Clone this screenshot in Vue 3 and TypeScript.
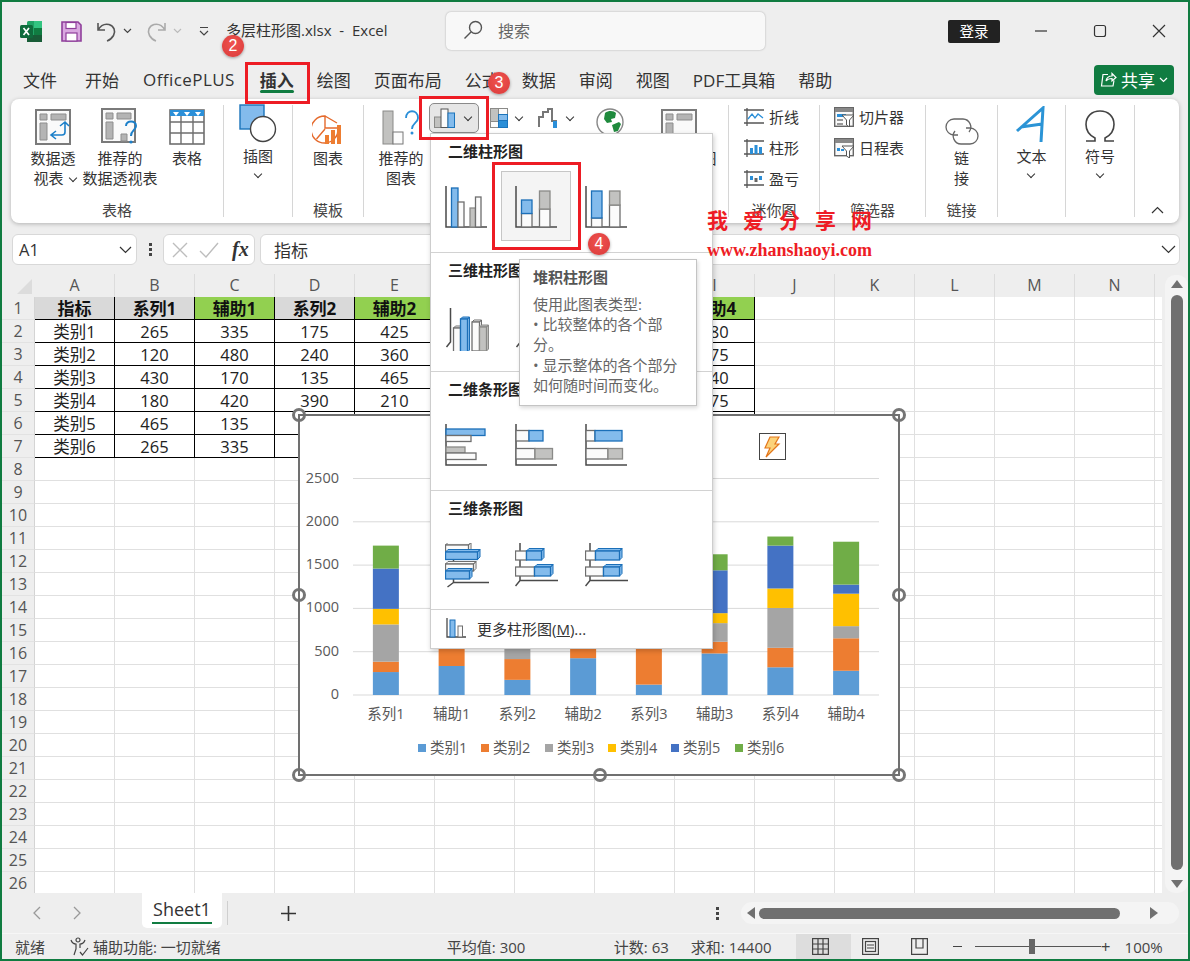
<script setup lang="ts">
import { computed } from 'vue'

interface Bar { k: string; x: number; y: number; w: number; h: number; d?: number }
interface ChartIcon { axis: string; bars: Bar[] }

const bar = (k: string, x: number, y: number, w: number, h: number, d?: number): Bar => ({ k, x, y, w, h, d })

const tabs = ['绘图', '页面布局', '公式', '数据', '审阅', '视图', 'PDF工具箱', '帮助']

const menuSections: { title: string; icons: ChartIcon[] }[] = [
  {
    title: '二维柱形图',
    icons: [
      { axis: 'M1 0V41H42', bars: [bar('blue', 6.5, 2, 6.5, 39), bar('white', 13, 16, 6, 25), bar('gray', 25, 22, 5.5, 19), bar('white', 30.5, 11, 5.5, 30)] },
      { axis: 'M1 0V41H42', bars: [bar('white', 6.5, 27.5, 10.5, 13.5), bar('blue', 6.5, 14, 10.5, 13.5), bar('white', 24.5, 23, 10.5, 18), bar('gray', 24.5, 5, 10.5, 18)] },
      { axis: 'M1 0V41H42', bars: [bar('white', 6.5, 32, 10.5, 9), bar('blue', 6.5, 5, 10.5, 27), bar('white', 24.5, 19, 10.5, 22), bar('gray', 24.5, 5, 10.5, 14)] }
    ]
  },
  {
    title: '三维柱形图',
    icons: [
      { axis: 'M5.5 3V37L1.5 42', bars: [bar('white', 8.5, 23, 7, 24, 2), bar('blue', 15.5, 14, 7, 33, 2), bar('white', 27, 17, 7.5, 29, 2), bar('gray', 34.5, 22, 7, 24, 2)] },
      { axis: 'M5.5 3V37L1.5 42', bars: [bar('white', 10, 30, 9, 16, 2), bar('blue', 10, 18, 9, 12, 2), bar('white', 26, 26, 9, 20, 2), bar('gray', 26, 10, 9, 16, 2)] },
      { axis: 'M5.5 3V37L1.5 42', bars: [bar('white', 10, 34, 9, 12, 2), bar('blue', 10, 10, 9, 24, 2), bar('white', 26, 24, 9, 22, 2), bar('gray', 26, 10, 9, 14, 2)] }
    ]
  },
  {
    title: '二维条形图',
    icons: [
      { axis: 'M1 0V41H42', bars: [bar('blue', 1, 5, 39, 6.5), bar('white', 1, 11.5, 25, 6), bar('gray', 1, 23, 19, 6), bar('white', 1, 29, 30, 6.5)] },
      { axis: 'M1 0V41H42', bars: [bar('white', 1, 6.5, 13, 10.5), bar('blue', 14, 6.5, 14, 10.5), bar('white', 1, 24.5, 19, 10.5), bar('gray', 20, 24.5, 17.5, 10.5)] },
      { axis: 'M1 0V41H42', bars: [bar('white', 1, 6.5, 9, 10.5), bar('blue', 10, 6.5, 27, 10.5), bar('white', 1, 24.5, 22, 10.5), bar('gray', 23, 24.5, 14.5, 10.5)] }
    ]
  },
  {
    title: '三维条形图',
    icons: [
      { axis: 'M8.5 0V39.5H44M8.5 39.5L2.5 44', bars: [bar('white', 0.5, 2, 23, 7, 2.5), bar('blue', 0.5, 9, 32, 7.5, 2.5), bar('white', 0.5, 21, 28, 7, 2.5), bar('blue', 0.5, 28, 24, 8, 2.5)] },
      { axis: 'M5 0V37.5H43M5 37.5L0.5 43', bars: [bar('white', 0.5, 8, 11, 9), bar('blue', 11.5, 8, 15, 9, 2.5), bar('white', 0.5, 24, 19, 9), bar('blue', 19.5, 24, 16, 9, 2.5)] },
      { axis: 'M5 0V37.5H43M5 37.5L0.5 43', bars: [bar('white', 0.5, 8, 10, 9), bar('blue', 10.5, 8, 24, 9, 2.5), bar('white', 0.5, 24, 18, 9), bar('blue', 18.5, 24, 16, 9, 2.5)] }
    ]
  }
]

function depthPath(b: Bar): string {
  const d = b.d ?? 0
  return `M${b.x} ${b.y}l${d} ${-d}h${b.w}l${-d} ${d}zM${b.x + b.w} ${b.y}l${d} ${-d}v${b.h}l${-d} ${d}z`
}

// sheet data, rows 1-7 and columns A-I; the last column only peeks out, so no letter
const columns = [...'ABCDEFGHIJKLMN'.split(''), '']
const table: (string | number)[][] = [
  ['指标', '系列1', '辅助1', '系列2', '辅助2', '系列3', '辅助3', '系列4', '辅助4'],
  ['类别1', 265, 335, 175, 425, 120, 480, 320, 280],
  ['类别2', 120, 480, 240, 360, 465, 135, 225, 375],
  ['类别3', 430, 170, 135, 465, 385, 215, 460, 140],
  ['类别4', 180, 420, 390, 210, 485, 115, 225, 375],
  ['类别5', 465, 135, 90, 510, 105, 495, 495, 105],
  ['类别6', 265, 335, 335, 265, 415, 185, 105, 495]
]
const rowCount = 26

function cellText(r: number, c: number): string | number {
  return table[r]?.[c] ?? ''
}

function cellClass(r: number, c: number): string[] {
  if (r >= table.length || c >= table[0].length) return []
  const out = ['edged']
  if (r === 0) {
    out.push('head-cell', c > 0 && c % 2 === 0 ? 'fill-green' : 'fill-gray')
  }
  return out
}

// chart geometry, in the chart's own coordinates
const seriesColors = ['#5b9bd5', '#ed7d31', '#a5a5a5', '#ffc000', '#4472c4', '#70ad47']
const plotLeft = 54
const plotRight = 580
const plotBottom = 280
const perUnit = 216.5 / 2500
const slot = (plotRight - plotLeft) / 8

const gridLines = [0, 500, 1000, 1500, 2000, 2500].map((v) => ({ v, y: plotBottom - v * perUnit }))

const stacks = computed(() =>
  table[0].slice(1).map((label, i) => {
    let sum = 0
    const segments = table.slice(1).map((row, k) => {
      const v = row[i + 1] as number
      const h = v * perUnit
      sum += h
      return { color: seriesColors[k], y: plotBottom - sum, h }
    })
    return { label, x: plotLeft + slot * (i + 0.5), segments }
  })
)

const legendX = [119, 182, 246, 309, 372, 436]
const handles = [[0, 0], [301, 0], [600, 0], [0, 180], [600, 180], [0, 360], [301, 360], [600, 360]]
</script>

<template>
  <div class="app">
    <!-- title bar -->
    <header class="titlebar">
      <svg class="ml18" width="22" height="21" viewBox="0 0 22 21">
        <rect x="7" y="0" width="15" height="21" rx="1.5" fill="#21a366" />
        <rect x="14" y="0" width="8" height="7" fill="#33c481" />
        <rect x="14" y="7" width="8" height="7" fill="#107c41" />
        <rect x="7" y="14" width="15" height="7" fill="#185c37" />
        <rect x="0" y="4" width="13" height="13" rx="1.5" fill="#0f6b3c" />
        <path d="M3.5 7l5.5 7M9 7l-5.5 7" stroke="#fff" stroke-width="1.7" />
      </svg>
      <svg class="ml19" width="21" height="21" viewBox="0 0 21 21">
        <path d="M1 1H17L20 4V20H1Z" fill="#d9a8e0" stroke="#8f3f9b" stroke-width="1.6" />
        <rect x="5" y="1.5" width="10" height="6" fill="#fff" stroke="#8f3f9b" stroke-width="1.2" />
        <rect x="5" y="12" width="11" height="8" fill="#fff" stroke="#8f3f9b" stroke-width="1.2" />
      </svg>
      <svg class="ml14" width="21" height="21" viewBox="0 0 21 21" fill="none" stroke="#555" stroke-width="1.6">
        <path d="M2 2V9H9M2 9C5 4 9 2.5 13 3.5C18 5 20 10 17.5 14.5C16 17 14 19 11 20" />
      </svg>
      <svg class="ml6" width="9" height="6" viewBox="0 0 9 6" fill="none" stroke="#444" stroke-width="1.2"><path d="M1 1l3.5 3.5L8 1" /></svg>
      <svg class="ml14" width="21" height="21" viewBox="0 0 21 21" fill="none" stroke="#aaa" stroke-width="1.6">
        <path d="M19 2V9H12M19 9C16 4 12 2.5 8 3.5C3 5 1 10 3.5 14.5C5 17 7 19 10 20" />
      </svg>
      <svg class="ml6" width="9" height="6" viewBox="0 0 9 6" fill="none" stroke="#bbb" stroke-width="1.2"><path d="M1 1l3.5 3.5L8 1" /></svg>
      <svg class="ml17" width="10" height="11" viewBox="0 0 10 11" fill="none" stroke="#444" stroke-width="1.2">
        <path d="M1 1.5H9M1 5l4 4 4-4" />
      </svg>
      <span class="doc-title">多层柱形图.xlsx&nbsp; - &nbsp;Excel</span>
      <div class="search">
        <svg width="20" height="20" viewBox="0 0 20 20" fill="none" stroke="#555" stroke-width="1.4">
          <circle cx="12.5" cy="7.5" r="6" /><path d="M8 12L1.5 18.5" />
        </svg>
        <span>搜索</span>
      </div>
      <span class="login">登录</span>
      <svg class="win-btn first-win" width="14" height="14" viewBox="0 0 14 14" stroke="#333" stroke-width="1.2"><path d="M1 7H13" /></svg>
      <svg class="win-btn" width="14" height="14" viewBox="0 0 14 14" fill="none" stroke="#333" stroke-width="1.2"><rect x="1.5" y="1.5" width="11" height="11" rx="2" /></svg>
      <svg class="win-btn" width="14" height="14" viewBox="0 0 14 14" stroke="#333" stroke-width="1.2"><path d="M1 1L13 13M13 1L1 13" /></svg>
    </header>

    <!-- tab strip -->
    <nav class="tabs">
      <span class="tab tab-file">文件</span>
      <span class="tab tab-home">开始</span>
      <span class="tab tab-plus">OfficePLUS</span>
      <span class="tab active">插入</span>
      <span v-for="t in tabs" :key="t" class="tab">{{ t }}</span>
      <button class="share">
        <svg width="17" height="17" viewBox="0 0 17 17" fill="none" stroke="#fff" stroke-width="1.2">
          <path d="M8 3.5H3L1.5 15H13L14 9.5M6 10C6.5 7 9 5 12 5V2.5L16 6.5L12 10V7.5C10 7.5 7.5 8 6 10Z" />
        </svg>
        <span>共享</span>
        <svg width="9" height="6" viewBox="0 0 9 6" fill="none" stroke="#fff" stroke-width="1.2"><path d="M1 1l3.5 3.5L8 1" /></svg>
      </button>
    </nav>

    <!-- ribbon -->
    <section class="ribbon">
      <div class="group g-tables">
        <div class="g-body">
          <div class="big w62">
            <div class="icon-area">
              <svg width="36" height="36" viewBox="0 0 36 36">
                <rect x="1" y="1" width="34" height="34" fill="#fafafa" stroke="#7a7a7a" stroke-width="2" />
                <path d="M5 5h7v6H5zM16 5h15v6H16zM5 14h7v17H5z" fill="#b4b4b4" stroke="#8d8d8d" />
                <path d="M30 14v9a3 3 0 0 1-3 3H17M25 17l5-4 4 4M21 22l-5 4 5 4" fill="none" stroke="#1b7fc9" stroke-width="1.6" />
              </svg>
            </div>
            <span>数据透</span>
            <span class="pivot-line">视表 <i class="chev" /></span>
          </div>
          <div class="big w72">
            <div class="icon-area">
              <svg width="38" height="37" viewBox="0 0 38 37">
                <rect x="1" y="1" width="33" height="33" fill="#fafafa" stroke="#7a7a7a" stroke-width="2" />
                <path d="M5 5h7v6H5zM16 5h14v6H16zM5 14h7v17H5zM20 26h6v7h-6z" fill="#b4b4b4" stroke="#8d8d8d" />
                <path d="M25 18c0-6 10-6 10 0 0 4-5 4-5 10" fill="none" stroke="#1b7fc9" stroke-width="2" />
                <circle cx="30" cy="34" r="1.6" fill="#1b7fc9" />
              </svg>
            </div>
            <span>推荐的</span>
            <span>数据透视表</span>
          </div>
          <div class="big w62">
            <div class="icon-area">
              <svg width="36" height="36" viewBox="0 0 36 36">
                <rect x="1" y="1" width="34" height="34" fill="#fff" stroke="#6e6e6e" stroke-width="1.6" />
                <rect x="1" y="1" width="34" height="6" fill="#2b8fd8" />
                <path d="M4 3h6l-3 4zM15 3h6l-3 4zM26 3h6l-3 4z" fill="#fff" />
                <path d="M1 13H35M1 24H35M12 7V35M24 7V35" stroke="#6e6e6e" stroke-width="1.4" />
              </svg>
            </div>
            <span>表格</span>
          </div>
        </div>
        <span class="g-label">表格</span>
      </div>

      <div class="group g-illus">
        <div class="g-body center">
          <div class="big low">
            <div class="icon-area">
              <svg width="38" height="39" viewBox="0 0 38 39">
                <rect x="1" y="1" width="24" height="24" fill="#83bbec" stroke="#1b74bb" stroke-width="1.4" />
                <circle cx="24" cy="25" r="12.5" fill="#fff" stroke="#444" stroke-width="1.4" />
              </svg>
            </div>
            <span>插图</span>
            <i class="chev stand" />
          </div>
        </div>
      </div>

      <div class="group g-template">
        <div class="g-body center">
          <div class="big">
            <div class="icon-area">
              <svg width="32" height="30" viewBox="0 0 32 30" fill="none">
                <path d="M13 1a13.5 13.5 0 1 0 13 12H13ZM13 1 25 8M13 14 4.5 24" stroke="#e56a2c" stroke-width="1.4" />
                <path d="M13 20h4v9h-4zM19 15h4v14h-4zM25 10h4v19h-4z" fill="#ed7d31" />
              </svg>
            </div>
            <span>图表</span>
          </div>
        </div>
        <span class="g-label">模板</span>
      </div>

      <div class="group g-charts">
        <div class="g-body">
          <div class="big rec-chart">
            <div class="icon-area">
              <svg width="38" height="35" viewBox="0 0 38 35">
                <rect x="1" y="1" width="10" height="33" fill="#c2c2c0" stroke="#8a8a88" />
                <rect x="11" y="22" width="10" height="12" fill="#fbfbfb" stroke="#777" />
                <path d="M24 8c0-9 12-9 12 0 0 5-6 5-6 11" fill="none" stroke="#2b8fd8" stroke-width="1.8" />
                <circle cx="30" cy="23" r="1.5" fill="#2b8fd8" />
              </svg>
            </div>
            <span>推荐的</span>
            <span>图表</span>
          </div>
          <div class="combo">
            <svg width="21" height="20" viewBox="0 0 21 20">
              <rect x="0.5" y="9" width="7" height="10.5" fill="#c2c2c0" stroke="#8a8a88" />
              <rect x="7" y="1" width="7" height="18.5" fill="#fbfbfb" stroke="#555" />
              <rect x="14" y="5" width="6.5" height="14.5" fill="#83bbec" stroke="#1b74bb" />
            </svg>
            <i class="chev" />
          </div>
          <div class="small-chart hier">
            <svg width="18" height="20" viewBox="0 0 18 20">
              <rect x="0.5" y="0.5" width="8" height="13" fill="#c2c2c0" stroke="#8a8a88" />
              <rect x="0.5" y="13.5" width="8" height="6" fill="#fbfbfb" stroke="#8a8a88" />
              <rect x="8.5" y="0.5" width="9" height="6" fill="#fbfbfb" stroke="#8a8a88" />
              <rect x="8.5" y="6.5" width="9" height="6" fill="#83bbec" stroke="#1b74bb" />
              <rect x="8.5" y="12.5" width="9" height="7" fill="#2b8fd8" stroke="#1b74bb" />
            </svg>
            <i class="chev" />
          </div>
          <div class="small-chart fall">
            <svg width="21" height="20" viewBox="0 0 21 20" fill="none">
              <path d="M1 19V9H5V4H10V1H14V13H18V19" stroke="#777" stroke-width="2" />
              <rect x="15" y="13" width="4" height="7" fill="#2b8fd8" />
            </svg>
            <i class="chev" />
          </div>
          <div class="map-btn">
            <svg width="28" height="28" viewBox="0 0 28 28">
              <circle cx="14" cy="14" r="13" fill="#fff" stroke="#888" stroke-width="1.4" />
              <path d="M9 5c4-3 9-2 11 0l-1 5-4 1 1 3-5 1-3-4zM16 17l7-3 2 2-3 7-4 1z" fill="#1f8a3d" />
            </svg>
          </div>
          <div class="big pivot-chart">
            <div class="icon-area">
              <svg width="36" height="36" viewBox="0 0 36 36">
                <rect x="1" y="1" width="34" height="34" fill="#fafafa" stroke="#7a7a7a" stroke-width="2" />
                <path d="M5 5h7v6H5zM16 5h15v6H16zM5 14h7v17H5z" fill="#b4b4b4" stroke="#8d8d8d" />
              </svg>
            </div>
            <span>数据透视图</span>
          </div>
        </div>
        <span class="g-label">图表</span>
      </div>

      <div class="group g-spark">
        <div class="g-body column">
          <div class="line-item">
            <svg width="20" height="18" viewBox="0 0 20 18" fill="none">
              <path d="M3 0V18M0 2H20M0 15H20" stroke="#555" stroke-width="1.3" />
              <path d="M4 11L8 6L11 10L14 6L19 10" stroke="#2b8fd8" stroke-width="1.3" />
            </svg>
            折线
          </div>
          <div class="line-item">
            <svg width="20" height="18" viewBox="0 0 20 18" fill="none">
              <path d="M3 0V18M0 2H20M0 15H20" stroke="#555" stroke-width="1.3" />
              <path d="M6 9h3v6H6zM10.5 6h3v9h-3zM15 8h3v7h-3z" fill="#2b8fd8" />
            </svg>
            柱形
          </div>
          <div class="line-item">
            <svg width="20" height="18" viewBox="0 0 20 18" fill="none">
              <path d="M3 0V18M0 2H20M0 15H20" stroke="#555" stroke-width="1.3" />
              <path d="M6 6h3v4H6zM15 6h3v4h-3z" fill="#2b8fd8" />
              <path d="M10.5 8h3v4h-3z" fill="#666" />
            </svg>
            盈亏
          </div>
        </div>
        <span class="g-label">迷你图</span>
      </div>

      <div class="group g-filter">
        <div class="g-body column">
          <div class="line-item">
            <svg width="20" height="20" viewBox="0 0 20 20">
              <rect x="0.7" y="0.7" width="18.6" height="18.6" fill="#fafafa" stroke="#666" stroke-width="1.4" />
              <rect x="1" y="1" width="18" height="4" fill="#888" />
              <path d="M3 7h9v3H3z" fill="#2b8fd8" /><path d="M3 12h6v2H3zM3 16h6v2H3z" fill="#999" />
              <path d="M8 8H20L15.5 13V20L12.5 18V13Z" fill="#fff" stroke="#555" />
            </svg>
            切片器
          </div>
          <div class="line-item">
            <svg width="20" height="20" viewBox="0 0 20 20">
              <rect x="0.7" y="0.7" width="18.6" height="17" fill="#fafafa" stroke="#666" stroke-width="1.4" />
              <rect x="1" y="1" width="18" height="4" fill="#888" />
              <path d="M3 10h3v3H3zM7 11h3v2H7z" fill="#2b8fd8" />
              <path d="M8 8H20L15.5 13V20L12.5 18V13Z" fill="#fff" stroke="#555" />
            </svg>
            日程表
          </div>
        </div>
        <span class="g-label">筛选器</span>
      </div>

      <div class="group g-link">
        <div class="g-body center">
          <div class="big">
            <div class="icon-area">
              <svg width="36" height="27" viewBox="0 0 36 27" fill="none" stroke="#666" stroke-width="1.3">
                <path d="M14 17H10A8 8 0 0 1 10 1H19A8 8 0 0 1 25 14" />
                <path d="M22 10H26A8 8 0 0 1 26 26H17A8 8 0 0 1 11 13" />
              </svg>
            </div>
            <span>链</span>
            <span>接</span>
          </div>
        </div>
        <span class="g-label">链接</span>
      </div>

      <div class="group g-text">
        <div class="g-body center">
          <div class="big low">
            <div class="icon-area">
              <svg width="30" height="37" viewBox="0 0 30 37" fill="none" stroke="#2b94d6" stroke-width="3">
                <path d="M1 25L27 2L25 36M5 21L26 18" />
              </svg>
            </div>
            <span>文本</span>
            <i class="chev stand" />
          </div>
        </div>
      </div>

      <div class="group g-symbol">
        <div class="g-body center">
          <div class="big low">
            <div class="icon-area">
              <svg width="30" height="33" viewBox="0 0 30 33" fill="none" stroke="#444" stroke-width="1.6">
                <path d="M1 31H10V28C4 25 1 20 1 14.5C1 6 7 1 15 1C23 1 29 6 29 14.5C29 20 26 25 20 28V31H29" />
              </svg>
            </div>
            <span>符号</span>
            <i class="chev stand" />
          </div>
        </div>
      </div>

      <div class="collapse">
        <svg width="13" height="8" viewBox="0 0 13 8" fill="none" stroke="#333" stroke-width="1.2"><path d="M1 7L6.5 1.5L12 7" /></svg>
      </div>
    </section>

    <!-- formula bar -->
    <div class="formula">
      <div class="name-box">
        <span>A1</span>
        <svg width="13" height="8" viewBox="0 0 13 8" fill="none" stroke="#333" stroke-width="1.2"><path d="M1 1L6.5 6.5L12 1" /></svg>
      </div>
      <div class="dots"><i /><i /><i /></div>
      <div class="fx-box">
        <svg width="16" height="16" viewBox="0 0 16 16" stroke="#bdbdbd" stroke-width="1.4"><path d="M1 1L15 15M15 1L1 15" /></svg>
        <svg width="20" height="16" viewBox="0 0 20 16" fill="none" stroke="#bdbdbd" stroke-width="1.4"><path d="M1 9L7 15L19 1" /></svg>
        <span class="fx">fx</span>
      </div>
      <div class="formula-input">
        <span>指标</span>
        <svg width="15" height="9" viewBox="0 0 15 9" fill="none" stroke="#333" stroke-width="1.2"><path d="M1 1L7.5 7.5L14 1" /></svg>
      </div>
    </div>

    <!-- worksheet -->
    <div class="sheet-row">
      <div class="grid">
        <div class="corner"><i /></div>
        <div v-for="(c, ci) in columns" :key="ci" class="col-head">{{ c }}</div>
        <template v-for="(_, r) in rowCount" :key="r">
          <div class="row-head">{{ r + 1 }}</div>
          <div v-for="(c, ci) in columns" :key="ci" class="cell" :class="cellClass(r, ci)">{{ cellText(r, ci) }}</div>
        </template>
      </div>
      <div class="vscroll">
        <div class="v-track">
          <i class="arrow-up" />
          <div class="v-thumb" />
          <i class="arrow-down" />
        </div>
      </div>
    </div>

    <!-- sheet tabs -->
    <div class="sheetbar">
      <svg class="nav-l" width="10" height="14" viewBox="0 0 10 14" fill="none" stroke="#999" stroke-width="1.3"><path d="M8 1L2 7L8 13" /></svg>
      <svg class="nav-r" width="10" height="14" viewBox="0 0 10 14" fill="none" stroke="#999" stroke-width="1.3"><path d="M2 1L8 7L2 13" /></svg>
      <div class="sheet-tab">Sheet1</div>
      <i class="tab-sep" />
      <svg class="add" width="15" height="15" viewBox="0 0 15 15" stroke="#333" stroke-width="1.6"><path d="M7.5 0V15M0 7.5H15" /></svg>
      <div class="dots sheet-dots"><i /><i /><i /></div>
      <div class="hscroll">
        <i class="arrow-left" />
        <div class="h-thumb" />
        <i class="arrow-right" />
      </div>
    </div>

    <!-- status bar -->
    <footer class="status">
      <span class="st-ready">就绪</span>
      <svg class="st-access" width="19" height="20" viewBox="0 0 19 20" fill="none" stroke="#444" stroke-width="1.2">
        <circle cx="8" cy="3" r="2" />
        <path d="M1 3C2 6 4 7 6 7V12L4 18M15 3C14 6 12 7 10 7V11M10 15L12.5 18L18 11" />
      </svg>
      <span>辅助功能: 一切就绪</span>
      <span class="st-avg">平均值: 300</span>
      <span class="st-count">计数: 63</span>
      <span class="st-sum">求和: 14400</span>
      <div class="view-btn selected">
        <svg width="17" height="17" viewBox="0 0 17 17" fill="none" stroke="#444" stroke-width="1.2">
          <rect x="0.6" y="0.6" width="15.8" height="15.8" /><path d="M0 6H17M0 11H17M6 0V17M11 0V17" />
        </svg>
      </div>
      <div class="view-btn">
        <svg width="17" height="17" viewBox="0 0 17 17" fill="none" stroke="#444" stroke-width="1.2">
          <rect x="0.6" y="0.6" width="15.8" height="15.8" /><rect x="3.5" y="3.5" width="10" height="10" /><path d="M5 7H12M5 10H12" />
        </svg>
      </div>
      <div class="view-btn last-view">
        <svg width="17" height="17" viewBox="0 0 17 17" fill="none" stroke="#444" stroke-width="1.2">
          <path d="M0.6 0.6H16.4V16.4H0.6ZM5 0.6V10H12V0.6" />
        </svg>
      </div>
      <div class="zoom">
        <i class="minus" />
        <div class="slider"><i /></div>
        <span class="plus">+</span>
      </div>
      <span class="st-zoom">100%</span>
    </footer>

    <!-- embedded chart, free on top of the sheet -->
    <div class="chart">
      <svg width="600" height="360" viewBox="0 0 600 360">
        <g v-for="g in gridLines" :key="g.v">
          <line :x1="plotLeft" :x2="plotRight" :y1="g.y" :y2="g.y" stroke="#d9d9d9" />
          <text :x="40" :y="g.y + 4" text-anchor="end" class="chart-text">{{ g.v }}</text>
        </g>
        <g v-for="s in stacks" :key="s.label">
          <rect v-for="seg in s.segments" :key="seg.color" :x="s.x - 13" :y="seg.y" width="26" :height="seg.h" :fill="seg.color" />
          <text :x="s.x" y="304" text-anchor="middle" class="chart-text">{{ s.label }}</text>
        </g>
        <g v-for="(x, i) in legendX" :key="x">
          <rect :x="x" y="329" width="8" height="8" :fill="seriesColors[i]" />
          <text :x="x + 12" y="338" class="chart-text">{{ table[i + 1][0] }}</text>
        </g>
        <circle v-for="(h, i) in handles" :key="i" :cx="h[0]" :cy="h[1]" r="5.5" fill="#fff" stroke="#757575" stroke-width="3" />
      </svg>
      <div class="quick">
        <svg width="18" height="22" viewBox="0 0 18 22">
          <path d="M6 1H15L11 8H15L2 21L6 12H1Z" fill="#fbd27a" stroke="#e3761b" stroke-width="1.2" />
        </svg>
      </div>
    </div>

    <!-- open dropdown -->
    <div class="menu">
      <div v-for="sec in menuSections" :key="sec.title" class="menu-sec">
        <div class="menu-title">{{ sec.title }}</div>
        <div class="menu-icons">
          <div v-for="(ic, i) in sec.icons" :key="i" class="menu-item" :class="{ picked: sec.title === '二维柱形图' && i === 1 }">
            <svg width="46" height="46" viewBox="0 0 46 46">
              <path :d="ic.axis" fill="none" stroke="#4a4a4a" stroke-width="1.5" />
              <template v-for="(b, k) in ic.bars" :key="k">
                <path v-if="b.d" :d="depthPath(b)" :class="'bar-' + b.k" stroke-width="1" />
                <rect :x="b.x" :y="b.y" :width="b.w" :height="b.h" :class="'bar-' + b.k" stroke-width="1.3" />
              </template>
            </svg>
          </div>
        </div>
      </div>
      <div class="menu-more">
        <svg width="20" height="20" viewBox="0 0 20 20">
          <path d="M1 0V19H20" fill="none" stroke="#4a4a4a" stroke-width="1.3" />
          <rect class="bar-blue" x="4" y="2" width="5" height="17" />
          <rect class="bar-white" x="12" y="8" width="4.5" height="11" />
        </svg>
        <span>更多柱形图(<u>M</u>)...</span>
      </div>
    </div>

    <!-- tooltip of the hovered chart type -->
    <div class="tip">
      <div class="tip-title">堆积柱形图</div>
      <p>使用此图表类型:<br />• 比较整体的各个部<br />分。<br />• 显示整体的各个部分<br />如何随时间而变化。</p>
    </div>

    <!-- tutorial marks drawn over the screenshot -->
    <i class="mark mark-tab" />
    <i class="mark mark-btn" />
    <i class="mark mark-item" />
    <span class="badge b2">2</span>
    <span class="badge b3">3</span>
    <span class="badge b4">4</span>
    <div class="watermark">
      <div class="wm-cn">我爱分享网</div>
      <div class="wm-url">www.zhanshaoyi.com</div>
    </div>
  </div>
</template>

<style scoped>
.app {
  position: relative;
  box-sizing: border-box;
  width: 1190px;
  height: 961px;
  padding: 2px;
  display: flex;
  flex-direction: column;
  overflow: hidden;
  background: #eeeeee;
  box-shadow: inset 0 0 0 2px #107c41;
  color: #333;
  font-family: "Open Sans", "Noto Sans CJK SC", sans-serif;
  font-size: 15px;
}

svg {
  display: block;
  flex: none;
}

i {
  display: block;
}

/* title bar */
.titlebar {
  height: 58px;
  flex: none;
  display: flex;
  align-items: center;
}
.ml18 { margin-left: 18px; }
.ml19 { margin-left: 19px; }
.ml14 { margin-left: 14px; }
.ml6 { margin-left: 6px; }
.ml17 { margin-left: 17px; }

.doc-title {
  margin: -3px 0 0 17px;
  width: 220px;
  font-size: 15px;
  white-space: nowrap;
}

.search {
  box-sizing: border-box;
  width: 319px;
  height: 38px;
  display: flex;
  align-items: center;
  gap: 15px;
  padding: 0 0 2px 17px;
  background: #f8f8f8;
  border-radius: 5px;
  box-shadow: 0 0 2px rgba(0, 0, 0, 0.3);
  color: #666;
  font-size: 16px;
}

.login {
  margin-left: 183px;
  width: 52px;
  height: 23px;
  line-height: 23px;
  text-align: center;
  background: #222;
  color: #fff;
  border-radius: 2px;
  font-size: 14.5px;
}

.win-btn {
  margin-left: 45px;
}
.first-win {
  margin-left: 34px;
}

/* tabs */
.tabs {
  height: 39px;
  flex: none;
  display: flex;
  align-items: center;
  gap: 23px;
  padding-right: 14px;
}
.tab {
  font-size: 17px;
  white-space: nowrap;
}
.tab-file { margin-left: 21px; }
.tab-home { margin-left: 5px; }
.tab-plus {
  margin-left: 1px;
  letter-spacing: 0.44px;
}
.active {
  position: relative;
  margin-left: 2px;
  font-weight: 700;
}
.active::after {
  content: "";
  position: absolute;
  left: 0;
  right: 0;
  bottom: -1px;
  height: 3px;
  border-radius: 2px;
  background: #107c41;
}

.share {
  margin-left: auto;
  width: 80px;
  height: 30px;
  display: flex;
  align-items: center;
  justify-content: center;
  gap: 4px;
  padding: 0;
  border: 0;
  border-radius: 4px;
  background: #107c41;
  color: #fff;
  font: inherit;
  font-size: 17px;
}

/* ribbon */
.ribbon {
  height: 124px;
  flex: none;
  box-sizing: border-box;
  margin: 0 9px;
  padding: 6px 0;
  display: flex;
  background: #fff;
  border-radius: 8px;
  box-shadow: 0 1px 4px rgba(0, 0, 0, 0.25);
}
.group {
  box-sizing: border-box;
  display: flex;
  flex-direction: column;
  border-right: 1px solid #d6d6d6;
}
.g-tables { width: 213px; }
.g-illus { width: 69px; }
.g-template { width: 71px; }
.g-charts { width: 365px; }
.g-spark { width: 91px; }
.g-filter { width: 106px; }
.g-link { width: 72px; }
.g-text { width: 68px; }
.g-symbol { width: 69px; }

.g-body {
  flex: 1;
  min-height: 0;
  display: flex;
}
.g-tables .g-body { padding-left: 11px; }
.center { justify-content: center; }
.column {
  flex-direction: column;
  margin-top: -4px;
  padding-left: 15px;
}
.g-filter .column {
  padding-left: 14px;
}

.g-label {
  flex: none;
  height: 14px;
  line-height: 14px;
  text-align: center;
  color: #444;
}

.big {
  display: flex;
  flex-direction: column;
  align-items: center;
  line-height: 20px;
  white-space: nowrap;
}
.w62 { width: 62px; }
.w72 { width: 72px; }
.icon-area {
  height: 43px;
  display: flex;
  align-items: flex-end;
  padding-bottom: 3px;
  box-sizing: border-box;
}
.low .icon-area {
  height: 41px;
}
.pivot-line {
  margin-right: -4px;
}
.chev {
  display: inline-block;
  width: 5px;
  height: 5px;
  margin: 0 0 3px 3px;
  border-right: 1.2px solid #333;
  border-bottom: 1.2px solid #333;
  transform: rotate(45deg);
}
.chev.stand {
  margin: 5px 0 0;
}

.rec-chart {
  width: 60px;
  margin-left: 7px;
}
.combo {
  box-sizing: border-box;
  width: 50px;
  height: 30px;
  margin: -2px 0 0 -2px;
  display: flex;
  align-items: center;
  gap: 7px;
  padding-left: 4px;
  background: #e6e6e6;
  border: 1px solid #8a8a8a;
  border-radius: 5px;
}
.small-chart {
  height: 26px;
  display: flex;
  align-items: center;
  gap: 5px;
}
.hier { margin-left: 11px; }
.fall { margin-left: 16px; }
.map-btn {
  margin: 3px 0 0 23px;
}
.pivot-chart {
  width: 70px;
  margin-left: 20px;
}

.line-item {
  height: 31px;
  display: flex;
  align-items: center;
  gap: 5px;
  white-space: nowrap;
}

.collapse {
  flex: 1;
  display: flex;
  justify-content: center;
  align-items: flex-end;
  padding-bottom: 3px;
}

/* formula bar */
.formula {
  height: 51px;
  flex: none;
  box-sizing: border-box;
  padding: 11px 8px 9px 10px;
  display: flex;
  font-size: 16.5px;
}
.name-box,
.fx-box,
.formula-input {
  box-sizing: border-box;
  display: flex;
  align-items: center;
  background: #fff;
  border: 1px solid #d8d8d8;
  border-radius: 6px;
}
.name-box {
  width: 125px;
  justify-content: space-between;
  padding: 0 4px 0 6px;
}
.dots {
  display: flex;
  flex-direction: column;
  justify-content: center;
  gap: 2px;
  width: 26px;
  align-items: center;
}
.dots i {
  width: 3px;
  height: 3px;
  background: #444;
}
.fx-box {
  width: 92px;
  gap: 11px;
  padding-left: 8px;
}
.fx {
  font-family: "Liberation Serif", serif;
  font-size: 20px;
  font-style: italic;
  font-weight: 700;
  margin-left: 2px;
}
.formula-input {
  flex: 1;
  margin-left: 5px;
  justify-content: space-between;
  padding: 0 3px 0 13px;
  font-size: 17px;
}

/* worksheet */
.sheet-row {
  height: 619px;
  flex: none;
  display: flex;
}
.grid {
  width: 1160px;
  display: grid;
  grid-template-columns: 33px repeat(15, 80px);
  grid-auto-rows: 23px;
  overflow: hidden;
  font-size: 16.5px;
  line-height: 23px;
}
.corner {
  position: relative;
  background: #eee;
}
.corner i {
  position: absolute;
  left: 15px;
  top: 5px;
  width: 15px;
  height: 15px;
  background: #dcdcdc;
  clip-path: polygon(100% 0, 100% 100%, 0 100%);
}
.col-head,
.row-head {
  background: #eee;
  color: #555;
  text-align: center;
  font-size: 16px;
}
.col-head {
  border-right: 1px solid #dcdcdc;
}
.row-head {
  border-right: 1px solid #d4d4d4;
  border-bottom: 1px solid #e2e2e2;
  box-sizing: border-box;
}
.cell {
  box-sizing: border-box;
  background: #fff;
  text-align: center;
  color: #222;
  border-right: 1px solid #e0e0e0;
  border-bottom: 1px solid #e0e0e0;
  white-space: nowrap;
}
.edged {
  border-color: #000;
}
.head-cell {
  font-weight: 700;
  font-size: 17px;
  color: #111;
}
.fill-gray { background: #d9d9d9; }
.fill-green { background: #92d050; }

.vscroll {
  flex: 1;
  padding: 1px 0 0 3px;
}
.v-track {
  height: 618px;
  display: flex;
  flex-direction: column;
  align-items: center;
  background: #f4f4f4;
  border-radius: 10px;
}
.arrow-up,
.arrow-down {
  width: 0;
  height: 0;
  border-left: 6px solid transparent;
  border-right: 6px solid transparent;
}
.arrow-up {
  margin-top: 5px;
  border-bottom: 8px solid #707070;
}
.arrow-down {
  margin-top: 10px;
  border-top: 8px solid #707070;
}
.v-thumb {
  width: 12px;
  height: 575px;
  margin-top: 7px;
  background: #707070;
  border-radius: 6px;
}

/* sheet tabs */
.sheetbar {
  height: 41px;
  flex: none;
  display: flex;
  align-items: center;
  border-bottom: 1px solid #f6f6f6;
  box-sizing: border-box;
}
.nav-l { margin-left: 30px; }
.nav-r { margin-left: 30px; }
.sheet-tab {
  position: relative;
  align-self: flex-start;
  box-sizing: border-box;
  margin-left: 60px;
  width: 80px;
  height: 35px;
  line-height: 32px;
  text-align: center;
  background: #fff;
  border-radius: 0 0 5px 5px;
  font-size: 18px;
  color: #333;
}
.sheet-tab::after {
  content: "";
  position: absolute;
  left: 10px;
  right: 10px;
  bottom: 4px;
  height: 2px;
  background: #107c41;
}
.tab-sep {
  width: 1px;
  height: 24px;
  margin-left: 5px;
  background: #cfcfcf;
}
.add {
  margin-left: 53px;
}
.sheet-dots {
  width: 6px;
  margin-left: 418px;
}
.hscroll {
  box-sizing: border-box;
  width: 438px;
  height: 22px;
  margin-left: 21px;
  display: flex;
  align-items: center;
  padding: 0 12px 0 6px;
  background: #f4f4f4;
  border-radius: 11px;
}
.h-thumb {
  width: 361px;
  height: 11px;
  margin-left: 4px;
  background: #707070;
  border-radius: 6px;
}
.arrow-left,
.arrow-right {
  width: 0;
  height: 0;
  border-top: 6px solid transparent;
  border-bottom: 6px solid transparent;
}
.arrow-left {
  border-right: 8px solid #707070;
}
.arrow-right {
  margin-left: 30px;
  border-left: 8px solid #707070;
}

/* status bar */
.status {
  flex: 1;
  display: flex;
  align-items: center;
  font-size: 15px;
  color: #444;
  white-space: nowrap;
}
.st-ready { margin-left: 13px; width: 30px; }
.st-access { margin: 0 4px 0 25px; }
.st-avg { margin-left: 226px; width: 80px; }
.st-count { margin-left: 87px; width: 56px; }
.st-sum { margin-left: 21px; width: 84px; }
.view-btn {
  width: 40px;
  align-self: stretch;
  display: flex;
  align-items: center;
  justify-content: center;
}
.selected {
  width: 55px;
  margin-left: 21px;
  padding-right: 6px;
  box-sizing: border-box;
  background: #dddddd;
}
.last-view {
  margin-left: 9px;
}
.zoom {
  display: flex;
  align-items: center;
  margin-left: 13px;
}
.minus {
  width: 9px;
  height: 1px;
  background: #444;
}
.slider {
  position: relative;
  width: 126px;
  height: 1px;
  margin-left: 13px;
  background: #555;
}
.slider i {
  position: absolute;
  left: 54px;
  top: -7px;
  width: 6px;
  height: 15px;
  background: #666;
}
.plus {
  font-size: 17px;
}
.st-zoom {
  margin-left: 14px;
}

/* chart object */
.chart {
  position: absolute;
  left: 299px;
  top: 415px;
  width: 600px;
  height: 360px;
}
.chart > svg {
  overflow: visible;
  background: #fff;
  outline: 2px solid #707070;
  outline-offset: -1px;
}
.chart-text {
  fill: #595959;
  font-size: 14.5px;
  font-family: "Open Sans", "Noto Sans CJK SC", sans-serif;
}
.quick {
  position: absolute;
  left: 460px;
  top: 18px;
  box-sizing: border-box;
  width: 27px;
  height: 27px;
  display: flex;
  align-items: center;
  justify-content: center;
  background: #fff;
  border: 1.5px solid #444;
}

/* dropdown */
.menu {
  position: absolute;
  left: 430px;
  top: 133px;
  box-sizing: border-box;
  width: 283px;
  height: 516px;
  background: #fff;
  border: 1px solid #cdcdcd;
  box-shadow: 1px 2px 5px rgba(0, 0, 0, 0.2);
}
.menu-sec {
  box-sizing: border-box;
  height: 119px;
  border-bottom: 1px solid #d2d2d2;
}
.menu-title {
  height: 37px;
  padding-left: 17px;
  line-height: 35px;
  font-weight: 700;
  color: #222;
}
.menu-icons {
  display: flex;
}
.menu-item {
  box-sizing: border-box;
  width: 70px;
  height: 70px;
  padding: 14px 0 0 13px;
  border: 1px solid transparent;
}
.picked {
  background: #f4f4f4;
  border-color: #c6c6c6;
}
.bar-blue { fill: #83bbec; stroke: #1b6fb8; }
.bar-gray { fill: #c2c2c0; stroke: #8a8a88; }
.bar-white { fill: #fbfbfb; stroke: #6e6e6e; }
.menu-more {
  height: 39px;
  box-sizing: border-box;
  padding: 0 0 3px 15px;
  display: flex;
  align-items: center;
  gap: 11px;
}

/* tooltip */
.tip {
  position: absolute;
  left: 519px;
  top: 259px;
  box-sizing: border-box;
  width: 178px;
  height: 147px;
  padding: 7px 0 0 13px;
  background: #fff;
  border: 1px solid #c4c4c4;
  box-shadow: 1px 2px 4px rgba(0, 0, 0, 0.15);
  color: #666;
  white-space: nowrap;
}
.tip-title {
  font-weight: 700;
  line-height: 20px;
  color: #555;
}
.tip p {
  margin: 7px 0 0;
  line-height: 20.2px;
}

/* tutorial marks */
.mark {
  position: absolute;
  box-sizing: border-box;
  border: 3px solid #ed1c24;
}
.mark-tab { left: 245px; top: 62px; width: 65px; height: 42px; }
.mark-btn { left: 419px; top: 96px; width: 70px; height: 44px; }
.mark-item { left: 492px; top: 162px; width: 89px; height: 88px; }

.badge {
  position: absolute;
  width: 22px;
  height: 22px;
  line-height: 22px;
  text-align: center;
  border-radius: 50%;
  background: radial-gradient(circle at 50% 40%, #f0534f, #d93a3a);
  box-shadow: 0 1px 3px rgba(0, 0, 0, 0.35);
  color: #fff;
  font-family: "Liberation Sans", sans-serif;
  font-size: 16px;
}
.b2 { left: 222px; top: 35px; }
.b3 { left: 488px; top: 72px; }
.b4 { left: 588px; top: 233px; }

.watermark {
  position: absolute;
  left: 707px;
  top: 207px;
  color: #ee1c25;
  font-weight: 700;
  white-space: nowrap;
}
.wm-cn {
  font-size: 21px;
  line-height: 28px;
  letter-spacing: 15px;
  font-family: "Liberation Serif", "Noto Sans CJK SC", serif;
}
.wm-url {
  margin-top: 1px;
  font-size: 18px;
  line-height: 28px;
  font-family: "Liberation Serif", serif;
}
</style>
